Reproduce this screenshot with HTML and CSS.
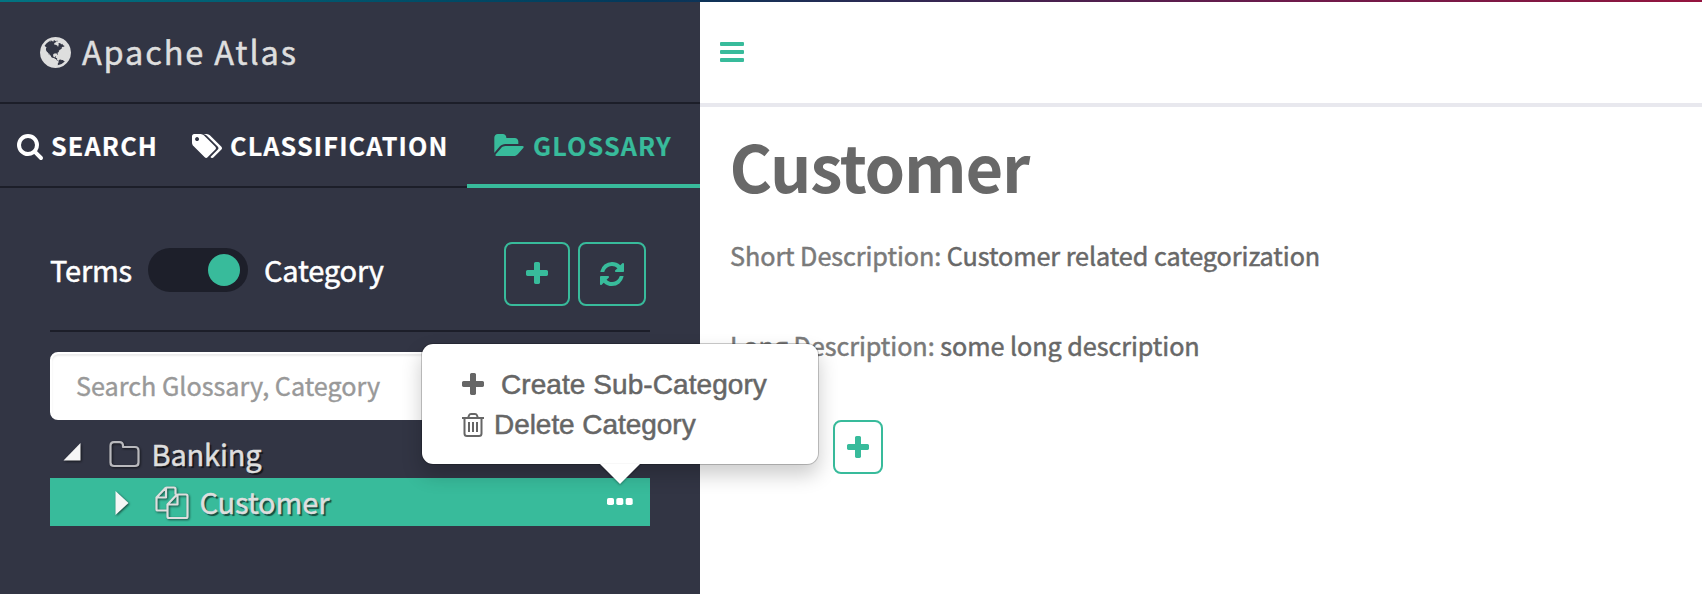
FILE: index.html
```html
<!DOCTYPE html>
<html lang="en">
<head>
<meta charset="utf-8">
<title>Apache Atlas</title>
<link rel="stylesheet" href="styles.css">
</head>
<body>
<svg class="defs" width="0" height="0">
  <symbol id="plus" viewBox="192 128 1408 1408"><path d="M1600 736v192q0 40-28 68t-68 28h-416v416q0 40-28 68t-68 28h-192q-40 0-68-28t-28-68v-416h-416q-40 0-68-28t-28-68v-192q0-40 28-68t68-28h416v-416q0-40 28-68t68-28h192q40 0 68 28t28 68v416h416q40 0 68 28t28 68z"/></symbol>
</svg>
<div class="rainbow"></div>
<div class="app">
  <aside class="sidebar">
    <div class="brand">
      <svg class="globe" viewBox="128 128 1536 1536"><path d="M896 128q209 0 385.500 103t279.500 279.500 103 385.500-103 385.500-279.500 279.500-385.500 103-385.500-103-279.500-279.500-103-385.500 103-385.500 279.500-279.500 385.500-103zm274 521q-2 1-9.500 9.500t-13.500 9.500q2 0 4.500-5t5-11 3.500-7q6-7 22-15 14-6 52-12 34-8 51 11-2-2 9.500-13t14.500-12q3-2 15-4.500t15-7.500l2-22q-12 1-17.500-7t-6.500-21q0 2-6 8 0-7-4.500-8t-11.500 1-9 1q-10-3-15-7.500t-8-16.500-4-15q-2-5-9.500-11t-9.500-10q-1-2-2.500-5.500t-3-6.500-4-5.500-5.500-2.500-7 5-7.500 10-4.500 5q-3-2-6-1.500t-4.500 1-4.500 3-5 3.500q-3 2-8.500 3t-8.500 2q15-5-1-11-10-4-16-3 9-4 7.500-12t-8.500-14h5q-1-4-8.500-8.500t-17.500-8.500-13-6q-8-5-34-9.500t-33-.5q-5 6-4.500 10.500t4 14 3.500 12.500q1 6-5.500 13t-6.500 12q0 7 14 15.500t10 21.500q-3 8-16 16t-16 12q-5 8-1.500 18.500t10.500 16.500q2 2 1.500 4t-3.500 4.500-5.500 4-6.500 3.500l-3 2q-11 5-20.500-6t-13.500-26q-7-25-16-30-23-8-29 1-5-13-41-26-25-9-58-4 6-1 0-15-7-15-19-12 3-6 4-17.500t1-13.500q3-13 12-23 1-1 7-8.500t9.500-13.500.5-6q35 4 50-11 5-5 11.500-17t10.500-17q9-6 14-5.500t14.500 5.500 14.500 5q14 1 15.500-11t-7.500-20q12 1 3-17-4-7-8-9-12-4-27 5-8 4 2 8-1-1-9.500 10.500t-16.500 17.500-16-5q-1-1-5.500-13.500t-9.500-13.500q-8 0-16 15 3-8-11-15t-24-8q19-12-8-27-7-4-20.500-5t-19.500 4q-5 7-5.500 11.500t5 8 10.500 5.500 11.500 4 8.500 3q14 10 8 14-2 1-8.500 3.500t-11.500 4.500-6 4q-3 4 0 14t-2 14q-5-5-9-17.500t-7-16.500q7 9-25 6l-10-1q-4 0-16 2t-20.500 1-13.500-8q-4-8 0-20 1-4 4-2-4-3-11-9.500t-10-8.500q-46 15-94 41 6 1 12-1 5-2 13-6.500t10-5.500q34-14 42-7l5-5q14 16 20 25-7-4-30-1-20 6-22 12 7 12 5 18-4-3-11.500-10t-14.500-11-15-5q-16 0-22 1-146 80-235 222 7 7 12 8 4 1 5 9t2.500 11 11.500-3q9 8 3 19 1-1 44 27 19 17 21 21 3 11-10 18-1-2-9-9t-9-4q-3 5 .5 18.500t10.500 12.500q-7 0-9.500 16t-2.500 35.500-1 23.500l2 1q-3 12 5.500 34.500t21.500 19.500q-13 3 20 43 6 8 8 9 3 2 12 7.500t15 10 10 10.500q4 5 10 22.500t14 23.500q-2 6 9.500 20t10.500 23q-1 0-2.500 1t-2.500 1q3 7 15.500 14t15.500 13q1 3 2 10t3 11 8 2q2-20-24-62-15-25-17-29-3-5-5.500-15.500t-4.500-14.500q2 0 6 1.500t8.500 3.500 7.500 4 2 3q-3 7 2 17.500t12 18.500 17 19 12 13q6 6 14 19.500t0 13.500q9 0 20 10.500t17 19.500q5 8 8 26t5 24q2 7 8.500 13.500t12.500 9.500l16 8 13 7q5 2 18.500 10.500t21.500 11.500q10 4 16 4t14.500-2.500 13.500-3.500q15-2 29 15t21 21q36 19 55 11-2 1 .5 7.500t8 15.500 9 14.500 5.500 8.500q5 6 18 15t18 15q6-4 7-9-3 8 7 20t18 10q14-3 14-32-31 15-49-18 0-1-2.500-5.500t-4-8.500-2.500-8.500 0-7.500 5-3q9 0 10-3.500t-2-12.500-4-13q-1-8-11-20t-12-15q-5 9-16 8t-16-9q0 1-1.500 5.500t-1.500 6.500q-13 0-15-1 1-3 2.500-17.500t3.500-22.500q1-4 5.500-12t7.500-14.500 4-12.500-4.500-9.500-17.500-2.500q-19 1-26 20-1 3-3 10.500t-5 11.500-9 7q-7 3-24 2t-24-5q-13-8-22.500-29t-9.500-37q0-10 2.500-26.500t3-25-5.500-24.500q3-2 9-9.500t10-10.500q2-1 4.500-1.500t4.500 0 4-1.500 3-6q-1-1-4-3-3-3-4-3 7 3 28.500-1.500t27.500 1.500q15 11 22-2 0-1-2.500-9.500t-.5-13.500q5 27 29 9 3 3 15.500 5t17.500 5q3 2 7 5.500t5.500 4.500 5-.5 8.500-6.500q10 14 12 24 11 40 19 44 7 3 11 2t4.500-9.500 0-14-1.500-12.500l-1-8v-18l-1-8q-15-3-18.500-12t1.500-18.500 15-18.500q1-1 8-3.500t15.500-6.500 12.500-8q21-19 15-35 7 0 11-9-1 0-5-3t-7.500-5-4.500-2q9-5 2-16 5-3 7.500-11t7.500-10q9 12 21 2 7-8 1-16 5-7 20.500-10.500t18.500-9.500q7 2 8-2t1-12 3-12q4-5 15-9t13-5l17-11q3-4 0-4 18 2 31-11 10-11-6-20 3-6-3-9.500t-15-5.500q3-1 11.500-.5t10.500-1.500q15-10-7-16-17-5-43 12zm-163 877q206-36 351-189-3-3-12.500-4.500t-12.500-3.500q-18-7-24-8 1-7-2.500-13t-8-9-12.500-8-11-7q-2-2-7-6t-7-5.500-7.500-4.500-8.500-2-10 1l-3 1q-3 1-5.500 2.500t-5.500 3-4 3 0 2.500q-21-17-36-22-5-1-11-5.500t-10.500-7-10-1.500-11.500 7q-5 5-6 15t-2 13q-7-5 0-17.500t2-18.500q-3-6-10.500-4.500t-12 4.500-11.500 8.500-9 6.500-8.500 5.500-8.500 7.500q-3 4-6 12t-5 11q-2-4-11.500-6.500t-9.500-5.500q2 10 4 35t5 38q7 31-12 48-27 25-29 40-4 22 12 26 0 7-8 20.500t-7 21.500q0 6 2 16z"/></svg>
      <span class="brand-name">Apache Atlas</span>
    </div>
    <nav class="tabs">
      <a class="tab tab-search"><svg width="26" height="26" viewBox="64 128 1664 1664"><path d="M1216 832q0-185-131.500-316.500t-316.500-131.500-316.500 131.500-131.500 316.500 131.500 316.500 316.500 131.500 316.500-131.500 131.500-316.500zm512 832q0 52-38 90t-90 38q-54 0-90-38l-343-342q-179 124-399 124-143 0-273.500-55.500t-225-150-150-225-55.500-273.500 55.500-273.500 150-225 225-150 273.500-55.500 273.500 55.500 225 150 150 225 55.500 273.500q0 220-124 399l343 343q37 37 37 90z"/></svg><span>SEARCH</span></a>
      <a class="tab tab-class"><svg width="30" height="24" viewBox="0 128 1899 1516"><path d="M448 448q0-53-37.500-90.500t-90.500-37.500-90.500 37.500-37.500 90.500 37.500 90.500 90.500 37.500 90.500-37.500 37.500-90.500zm1067 576q0 53-37 90l-491 492q-39 37-91 37-53 0-90-37l-715-716q-38-37-64.500-101t-26.500-117v-416q0-52 38-90t90-38h416q53 0 117 26.500t102 64.500l715 714q37 39 37 91zm384 0q0 53-37 90l-491 492q-39 37-91 37-36 0-59-14t-53-45l470-470q37-37 37-90 0-52-37-91l-715-714q-38-38-102-64.500t-117-26.500h224q53 0 117 26.500t102 64.500l715 714q37 39 37 91z"/></svg><span>CLASSIFICATION</span></a>
      <a class="tab tab-gloss active"><svg width="30" height="22" viewBox="0 128 1879 1408"><path d="M1879 952q0 31-31 66l-336 396q-43 51-120.500 86.500t-143.500 35.500h-1088q-34 0-60.500-13t-26.500-43q0-31 31-66l336-396q43-51 120.500-86.500t143.500-35.500h1088q34 0 60.500 13t26.500 43zm-343-344v160h-832q-94 0-197 47.500t-164 119.500l-337 396-5 6q0-4-.5-12.500t-.5-12.500v-960q0-92 66-158t158-66h320q92 0 158 66t66 158v32h544q92 0 158 66t66 158z"/></svg><span>GLOSSARY</span></a>
    </nav>
    <div class="panel">
      <div class="controls">
        <span class="terms">Terms</span>
        <span class="switch"><i></i></span>
        <span class="category">Category</span>
        <div class="actions">
          <button class="btn add"><svg width="22" height="22"><use href="#plus"/></svg></button>
          <button class="btn refresh"><svg width="24" height="24" viewBox="128 128 1536 1536"><path d="M1639 1056q0 5-1 7-64 268-268 434.500t-478 166.500q-146 0-282.500-55t-243.500-157l-129 129q-19 19-45 19t-45-19-19-45v-448q0-26 19-45t45-19h448q26 0 45 19t19 45-19 45l-137 137q71 66 161 102t187 36q134 0 250-65t186-179q11-17 53-117 8-23 30-23h192q13 0 22.500 9.500t9.500 22.500zm25-800v448q0 26-19 45t-45 19h-448q-26 0-45-19t-19-45 19-45l138-138q-148-137-349-137-134 0-250 65t-186 179q-11 17-53 117-8 23-30 23h-199q-13 0-22.500-9.500t-9.500-22.500v-7q65-268 270-434.500t480-166.500q146 0 284 55.500t245 156.500l130-129q19-19 45-19t45 19 19 45z"/></svg></button>
        </div>
      </div>
      <input class="search" type="text" placeholder="Search Glossary, Category">
      <div class="tree">
        <div class="row banking">
          <svg class="caret" width="20" height="21" viewBox="0 0 20 21"><path d="M1.500 19.500L18.500 2V19.500z"/></svg>
          <svg class="line-icon folder" width="32" height="27" viewBox="0 0 32 27"><path d="M1.500 5V21.500Q1.500 25 5 25H26Q29.500 25 29.500 21.500V9.500Q29.500 6 26 6H14V4.500Q14 1.200 10.500 1.200H5Q1.500 1.200 1.500 5z"/></svg>
          <span>Banking</span>
        </div>
        <div class="row customer">
          <svg class="caret" width="16" height="26" viewBox="0 0 16 26"><path d="M1.500 1L14.500 13 1.500 25z"/></svg>
          <svg class="line-icon files" width="34" height="34" viewBox="0 0 34 34"><path d="M12.500 24.500H2Q1.500 24.500 1.500 23.500V11.500L10.500 2Q11 1.500 12 1.500H19Q20.500 1.500 20.500 3V8.500M11 1.500V11.500H1.500M24 8.500H31Q32.500 8.500 32.500 10V30.500Q32.500 32 31 32H14Q12.500 32 12.500 30.500V18.500L21.500 9Q22 8.500 23 8.500H24M22.500 8.500V18.500H12.500"/></svg>
          <span>Customer</span>
          <svg class="dots" width="26" height="7" viewBox="0 0 26 7"><rect width="7" height="7" rx="1.800"/><rect x="9.300" width="7" height="7" rx="1.800"/><rect x="18.700" width="7" height="7" rx="1.800"/></svg>
        </div>
      </div>
    </div>
  </aside>
  <main class="main">
    <header class="topbar">
      <svg class="bars" width="24" height="20" viewBox="0 0 24 20"><rect width="24" height="4" rx="1"/><rect y="8" width="24" height="4" rx="1"/><rect y="16" width="24" height="4" rx="1"/></svg>
    </header>
    <section class="detail">
      <h1>Customer</h1>
      <p class="short"><span class="label">Short Description:</span> <span class="value">Customer related categorization</span></p>
      <p class="long"><span class="label">Long Description:</span> <span class="value">some long description</span></p>
      <div class="terms-line"><button class="btn small"><svg width="22" height="22"><use href="#plus"/></svg></button></div>
    </section>
  </main>
</div>
<div class="popover">
  <div class="item create"><svg width="22" height="22"><use href="#plus"/></svg><span>Create Sub-Category</span></div>
  <div class="item delete"><svg class="trash" width="22" height="24" viewBox="0 0 22 24"><path d="M0 5H22M2.500 5V20.500Q2.500 23 5 23H17Q19.500 23 19.500 20.500V5M6 5L7.200 2Q7.600 1 9 1H13Q14.400 1 14.800 2L16 5M7 9V19M11 9V19M15 9V19"/></svg><span>Delete Category</span></div>
  <svg class="arrow" width="44" height="23" viewBox="0 0 44 23"><path d="M2 0H42L22 20z"/></svg>
</div>
</body>
</html>
```

FILE: styles.css
```css
* { box-sizing: border-box; }
body {
  margin: 0;
  width: 1702px;
  height: 594px;
  overflow: hidden;
  background: #fff;
  font-family: "Noto Sans CJK SC", "Noto Sans", sans-serif;
  color: #686868;
  -webkit-text-stroke: .5px currentColor;
}
svg { display: block; flex: none; fill: currentColor; }
.defs { position: absolute; }
span { white-space: nowrap; }
.rainbow {
  height: 2px;
  background: linear-gradient(90deg, #027482 0%, #004b66 26%, #04375a 38%, #44214f 60%, #6e1a4b 76%, #871741 94%, #95143f 100%);
}
.app { display: flex; height: 592px; }
.sidebar { width: 700px; flex: none; background: #323544; color: #fff; }
.brand {
  display: flex;
  height: 102px;
  padding: 35px 0 0 40px;
  border-bottom: 2px solid #1c1e29;
  color: #dedede;
}
.globe { width: 31px; height: 31px; }
.brand-name { margin: -10px 0 0 11px; font-size: 32.500px; line-height: 48px; letter-spacing: 1.850px; }
.tabs { display: flex; height: 84px; -webkit-text-stroke-width: .2px; }
.tab {
  display: flex;
  border-bottom: 2px solid #1c1e29;
  padding-top: 30px;
  font-size: 25.200px;
  font-weight: 700;
  line-height: 36px;
  letter-spacing: 1.150px;
}
.tab span { margin-top: -7px; }
.tab-search { width: 175px; padding-left: 17px; }
.tab-search span { margin-left: 8px; }
.tab-class { width: 292px; padding-left: 17px; }
.tab-class span { margin-left: 8px; }
.tab-gloss { width: 233px; padding-left: 27px; }
.tab-gloss span { margin-left: 9px; }
.active { color: #38bb9b; border-bottom: 4px solid #38bb9b; }
.panel { padding: 54px 50px 0; }
.controls { display: flex; height: 90px; border-bottom: 2px solid #1c1e29; font-size: 29px; line-height: 40px; letter-spacing: -.2px; }
.terms { width: 98px; margin-top: 7px; }
.switch { width: 100px; height: 44px; margin-top: 6px; padding: 6px 8px; border-radius: 22px; background: #1d1f2a; display: flex; justify-content: flex-end; }
.switch i { width: 32px; height: 32px; border-radius: 50%; background: #38bb9b; }
.category { margin: 7px 0 0 16px; }
.actions { display: flex; gap: 8px; margin: 0 4px 0 auto; }
.btn {
  display: flex;
  align-items: center;
  justify-content: center;
  padding: 0;
  border: 2px solid #38bb9b;
  border-radius: 8px;
  background: transparent;
  color: #38bb9b;
}
.add { width: 66px; height: 64px; padding-bottom: 2px; }
.refresh { width: 68px; height: 64px; }
.search {
  display: block;
  width: 600px;
  height: 68px;
  margin: 20px 0 10px;
  padding: 0 24px 3px;
  border: 2px solid #fff;
  border-radius: 8px;
  background: #fff;
  box-shadow: inset 0 2px 2px rgba(0, 0, 0, .08);
  font: 25.200px "Noto Sans CJK SC", "Noto Sans", sans-serif;
  -webkit-text-stroke: .4px #999;
}
.search::placeholder { color: #999; opacity: 1; }
.row { display: flex; height: 48px; font-size: 29px; line-height: 40px; letter-spacing: -.15px; color: #dedede; text-shadow: 2px 2px 1px rgba(0, 0, 0, .6); }
.row svg { filter: drop-shadow(1px 1px 1px rgba(0, 0, 0, .6)); }
.caret { fill: #f6f6f6; }
.line-icon { fill: none; stroke: #dedede; stroke-width: 2.200; stroke-linejoin: round; }
.banking .caret { margin: 11px 0 0 12px; }
.folder { margin: 11px 0 0 27px; stroke: #b9b9bd; }
.banking span { margin: 3px 0 0 10.500px; }
.customer { background: #38bb9b; }
.customer .caret { margin: 12px 0 0 64px; }
.files { margin: 8px 0 0 25px; }
.customer span { margin: 3px 0 0 10.500px; }
.row .dots { margin: 20px 17px 0 auto; fill: #fff; filter: none; }
.main { flex: 1; }
.topbar { height: 105px; padding: 40px 0 0 20px; border-bottom: 4px solid #e8e8ee; }
.bars { color: #38bb9b; }
.detail { padding: 18px 0 0 30px; }
h1 { margin: 0 0 0 -.5px; height: 112px; font-size: 65px; line-height: 80px; font-weight: 700; letter-spacing: -1.250px; -webkit-text-stroke-width: 0; }
p { margin: 0; height: 90px; font-size: 25.200px; line-height: 36px; letter-spacing: -.060px; }
.label { color: #7a7a7a; }
.terms-line { display: flex; padding: 3px 0 0 103px; }
.small { width: 50px; height: 54px; }
.popover {
  position: absolute;
  left: 421px;
  top: 343px;
  width: 398px;
  height: 122px;
  padding: 29px 0 0 40px;
  border: 1px solid rgba(0, 0, 0, .2);
  border-radius: 12px;
  background: #fff;
  background-clip: padding-box;
  box-shadow: 0 10px 20px rgba(0, 0, 0, .2);
  font: 28px/40px "Liberation Sans", Arial, sans-serif;
  color: #666;
}
.item { display: flex; height: 40px; }
.create span { margin: -8px 0 0 17px; letter-spacing: .070px; }
.delete span { margin: -8px 0 0 10px; letter-spacing: -.050px; }
.trash { fill: none; stroke: #666; stroke-width: 2; }
.arrow { position: absolute; left: 176px; top: 120px; fill: #fff; filter: drop-shadow(0 1px 1px rgba(0, 0, 0, .35)); }
```
